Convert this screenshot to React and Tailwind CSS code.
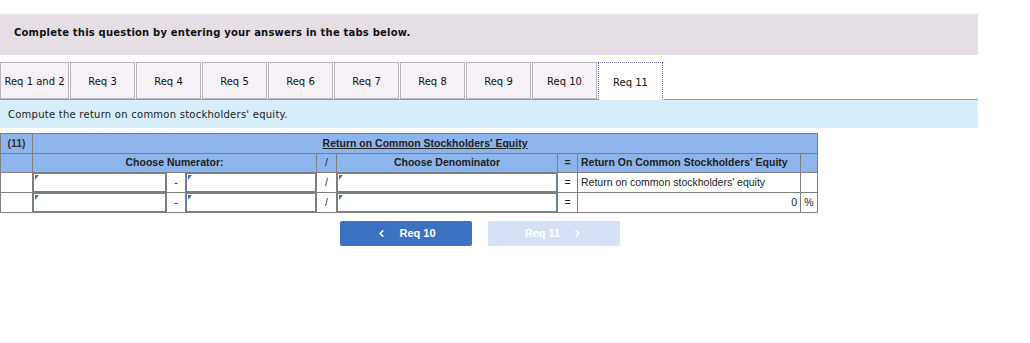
import React from "react";
import { ChevronLeft, ChevronRight } from "lucide-react";

const tabs = ["Req 1 and 2","Req 3","Req 4","Req 5","Req 6","Req 7","Req 8","Req 9","Req 10","Req 11"];

function Sel() {
  return (
    <div className="relative h-[19px] w-full bg-white border border-[#6d7fa0]">
      <div className="absolute left-[1px] top-[1px] w-0 h-0 border-t-[5px] border-t-[#3b74c8] border-r-[4px] border-r-transparent" />
    </div>
  );
}

export default function App() {
  const td = "border border-[#7f7f7f] p-0";
  return (
    <div className="w-[1030px] h-[343px] bg-white" style={{ fontFamily: '"DejaVu Sans", Verdana, sans-serif' }}>
      <div className="h-[14px]" />
      <div className="w-[978px] h-[41px] bg-[#e5dee5] pl-[14px] pt-[11px] leading-[12px]">
        <span className="text-[10px] leading-[12px] font-bold text-[#111] tracking-[0.2px]">Complete this question by entering your answers in the tabs below.</span>
      </div>
      <div className="h-[7px]" />
      <div className="w-[978px] flex h-[38px]">
        {tabs.map((t, i) => {
          const active = i === tabs.length - 1;
          return (
            <div
              key={t}
              className={
                (i === 0 ? "w-[70px] " : "w-[66px] ") +
                "flex flex-col h-[38px]"
              }
            >
              <div
                className={
                  (active
                    ? "bg-white border-l border-r border-t border-dotted border-[#5a6f9a] h-[38px] "
                    : "bg-[#f6f1f6] border border-[#b9b4b9] h-[37px] ") +
                  "mr-[1px] pt-[2px] flex items-center justify-center text-[10px] text-[#111]"
                }
              >
                {t}
              </div>
              {!active && <div className="h-[1px] bg-[#9a9a9a]" />}
            </div>
          );
        })}
        <div className="flex-1 flex flex-col justify-end">
          <div className="h-[1px] bg-[#9a9a9a]" />
        </div>
      </div>
      <div className="w-[978px] h-[28px] bg-[#d6edfa] flex items-center pl-[8px]">
        <span className="text-[10px] text-[#222] tracking-[0.25px]">Compute the return on common stockholders' equity.</span>
      </div>
      <div className="h-[5px]" />
      <table className="border-collapse table-fixed w-[817px] text-[10.5px]" style={{ fontFamily: '"Liberation Sans", Arial, sans-serif' }}>
        <colgroup>
          <col style={{ width: 32 }} />
          <col style={{ width: 134 }} />
          <col style={{ width: 19 }} />
          <col style={{ width: 131 }} />
          <col style={{ width: 20 }} />
          <col style={{ width: 221 }} />
          <col style={{ width: 20 }} />
          <col style={{ width: 223 }} />
          <col style={{ width: 17 }} />
        </colgroup>
        <tbody>
          <tr className="h-[20px] bg-[#8db5ec]">
            <td className={td + " text-center font-bold text-[#333]"}>(11)</td>
            <td className={td + " text-center font-bold text-[#222]"} colSpan={8}>
              <span className="underline">Return on Common Stockholders' Equity</span>
            </td>
          </tr>
          <tr className="h-[19px] bg-[#8db5ec] font-bold text-[#222]">
            <td className={td}></td>
            <td className={td + " text-center"} colSpan={3}>Choose Numerator:</td>
            <td className={td + " text-center font-normal"}>/</td>
            <td className={td + " text-center"}>Choose Denominator</td>
            <td className={td + " text-center"}>=</td>
            <td className={td + " pl-[3px] text-left"}>Return On Common Stockholders' Equity</td>
            <td className={td}></td>
          </tr>
          {[0, 1].map((r) => (
            <tr key={r} className="h-[20px] bg-white text-[#222]">
              <td className={td}></td>
              <td className={td}><Sel /></td>
              <td className={td + " text-center"}>-</td>
              <td className={td}><Sel /></td>
              <td className={td + " text-center"}>/</td>
              <td className={td}><Sel /></td>
              <td className={td + " text-center"}>=</td>
              <td className={td + (r === 0 ? " pl-[3px] text-left" : " pr-[3px] text-right")}>
                {r === 0 ? "Return on common stockholders' equity" : "0"}
              </td>
              <td className={td + " text-center"}>{r === 1 ? "%" : ""}</td>
            </tr>
          ))}
        </tbody>
      </table>
      <div className="flex gap-[16px] pl-[340px] mt-[8px]" style={{ fontFamily: '"Liberation Sans", Arial, sans-serif' }}>
        <div className="w-[132px] h-[25px] rounded-[2px] bg-[#3d72c3] flex items-center justify-center gap-[12px] text-white text-[11px] font-bold">
          <ChevronLeft size={11} strokeWidth={3.5} />
          <span>Req 10</span>
        </div>
        <div className="w-[132px] h-[25px] rounded-[2px] bg-[#d6e1f6] flex items-center justify-center gap-[12px] text-white text-[11px] font-bold">
          <span>Req 11</span>
          <ChevronRight size={11} strokeWidth={3.5} />
        </div>
      </div>
    </div>
  );
}
